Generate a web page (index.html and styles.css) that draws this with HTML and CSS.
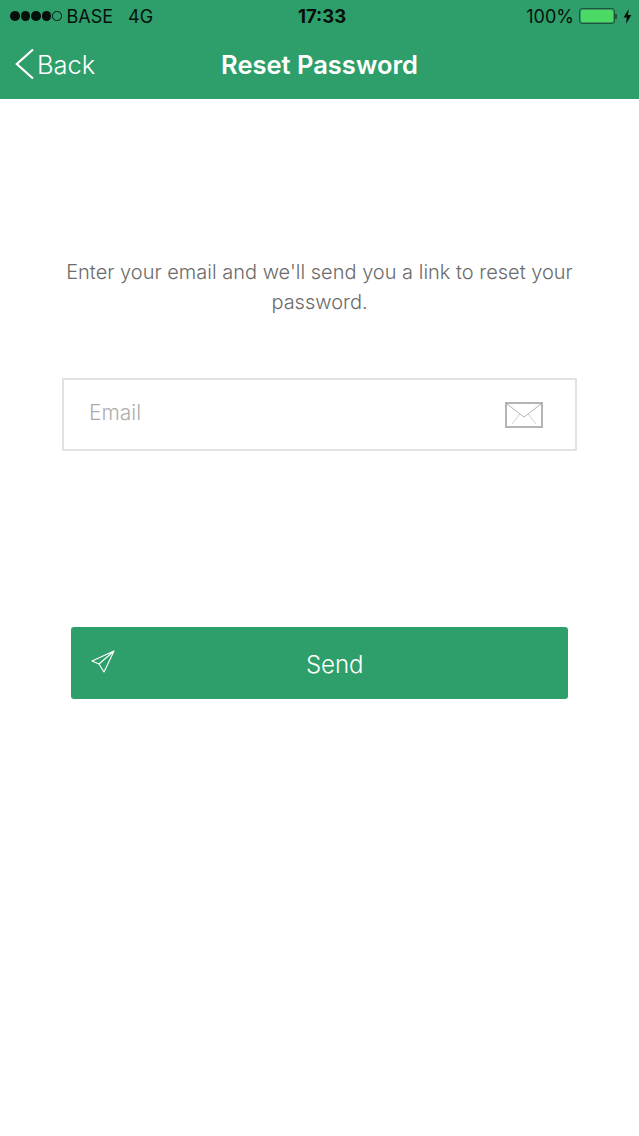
FILE: index.html
```html
<!DOCTYPE html>
<html lang="en">
<head>
    <meta charset="UTF-8">
    <meta name="viewport" content="width=device-width, initial-scale=1.0">
    <title>Reset Password</title>
    <link rel="stylesheet" href="styles.css">
</head>
<body>

    <header class="header">
        <div class="status">
            <div class="status-left">
                <span class="dots">
                    <i class="dot"></i><i class="dot"></i><i class="dot"></i><i class="dot"></i><i class="dot dot-empty"></i>
                </span>
                <span class="carrier">BASE</span>
                <span class="network">4G</span>
            </div>
            <div class="status-time">17:33</div>
            <div class="status-right">
                <span class="percent">100%</span>
                <span class="battery"><span class="battery-fill"></span></span>
                <span class="battery-tip"></span>
                <svg class="bolt" width="9" height="15" viewBox="0 0 9 15">
                    <path d="M5.6 0 L0.6 8.4 H3.8 L3 15 L8.4 6 H5 Z" fill="#06100b"/>
                </svg>
            </div>
        </div>
        <nav class="nav">
            <a class="back">
                <svg width="20" height="32" viewBox="0 0 20 32">
                    <path d="M18 1.500 L1.800 16 L18 30.500" fill="none" stroke="#fff" stroke-width="2.200"/>
                </svg>
                <span>Back</span>
            </a>
            <h1 class="nav-title">Reset Password</h1>
        </nav>
    </header>

    <main class="content">
        <p class="intro">Enter your email and we'll send you a link to reset your password.</p>

        <div class="field">
            <span class="field-label">Email</span>
            <svg class="mail-icon" width="38" height="26" viewBox="0 0 38 26">
                <rect x="1" y="1" width="36" height="24" fill="none" stroke="#b4b4b4" stroke-width="2"/>
                <path d="M2 2 L19 15 L36 2" fill="none" stroke="#b4b4b4" stroke-width="1"/>
                <path d="M7 22 L15 12 M31 22 L23 12" fill="none" stroke="#d4d4d4" stroke-width="1"/>
            </svg>
        </div>

        <button class="send">
            <svg class="send-icon" width="24" height="24" viewBox="0 0 24 24">
                <path d="M23 1 L1 11 L8 14 L13 22 Z M23 1 L8 14" fill="none" stroke="#fff" stroke-width="1.100" stroke-linejoin="round"/>
            </svg>
            <span>Send</span>
        </button>
    </main>

</body>
</html>
```

FILE: styles.css
```css
* {
    box-sizing: border-box;
}

body {
    margin: 0;
    background: #fff;
    font-family: "Inter", "Liberation Sans", Arial, sans-serif;
    height: 1136px;
    overflow: hidden;
}

.header {
    background: #2e9f6b;
    height: 99px;
}

.status {
    height: 32px;
    padding: 0 7px 0 10px;
    display: flex;
    align-items: center;
    justify-content: space-between;
    color: #06100b;
    font-size: 18px;
    position: relative;
}

.status-left {
    display: flex;
    align-items: center;
}

.dots {
    display: flex;
    gap: 1px;
    margin-right: 5px;
}

.dot {
    width: 9.500px;
    height: 9.500px;
    border-radius: 50%;
    background: #06100b;
}

.dot-empty {
    background: none;
    border: 1px solid #06100b;
}

.network {
    margin-left: 15px;
}

.status-time {
    font-weight: 700;
    position: absolute;
    left: 5px;
    right: 0;
    text-align: center;
    pointer-events: none;
    font-size: 18.500px;
}

.status-right {
    display: flex;
    align-items: center;
}

.percent {
    margin-right: 5px;
    font-size: 18px;
}

.battery {
    width: 36px;
    height: 16px;
    border: 1px solid #24533a;
    border-radius: 3px;
    padding: 1px;
    display: block;
}

.battery-fill {
    display: block;
    height: 100%;
    background: #4cd964;
    border-radius: 1.500px;
}

.battery-tip {
    width: 2px;
    height: 5px;
    background: #24533a;
    margin-right: 6px;
}

.nav {
    height: 65px;
    position: relative;
    display: flex;
    align-items: center;
    justify-content: center;
}

.back {
    position: absolute;
    left: 15px;
    top: 16px;
    display: flex;
    align-items: center;
    gap: 2px;
    color: #fff;
    font-size: 25.500px;
    font-weight: 300;
}

.nav-title {
    margin: 0;
    color: #fff;
    font-size: 25.500px;
    font-weight: 600;
}

.content {
    padding-top: 158px;
}

.intro {
    margin: 0 auto;
    width: 530px;
    text-align: center;
    color: #6b6b6b;
    font-size: 20px;
    font-weight: 300;
    line-height: 30px;
}

.field {
    margin: 61px 0 0 62px;
    width: 515px;
    height: 73px;
    border: 2px solid #e2e2e2;
    display: flex;
    align-items: center;
    justify-content: space-between;
    padding: 0 32px 0 25px;
}

.field-label {
    color: #adadad;
    font-size: 21px;
    font-weight: 300;
    margin-top: -5px;
}

.send {
    margin: 176px 0 0 71px;
    width: 496.500px;
    height: 72px;
    background: #2e9f6b;
    border: 0;
    border-radius: 3px;
    color: #fff;
    font-family: inherit;
    font-size: 24px;
    font-weight: 300;
    display: flex;
    align-items: center;
    justify-content: center;
    position: relative;
    padding: 2px 0 0 31px;
}

.send-icon {
    position: absolute;
    left: 20px;
    top: 23px;
}
```
